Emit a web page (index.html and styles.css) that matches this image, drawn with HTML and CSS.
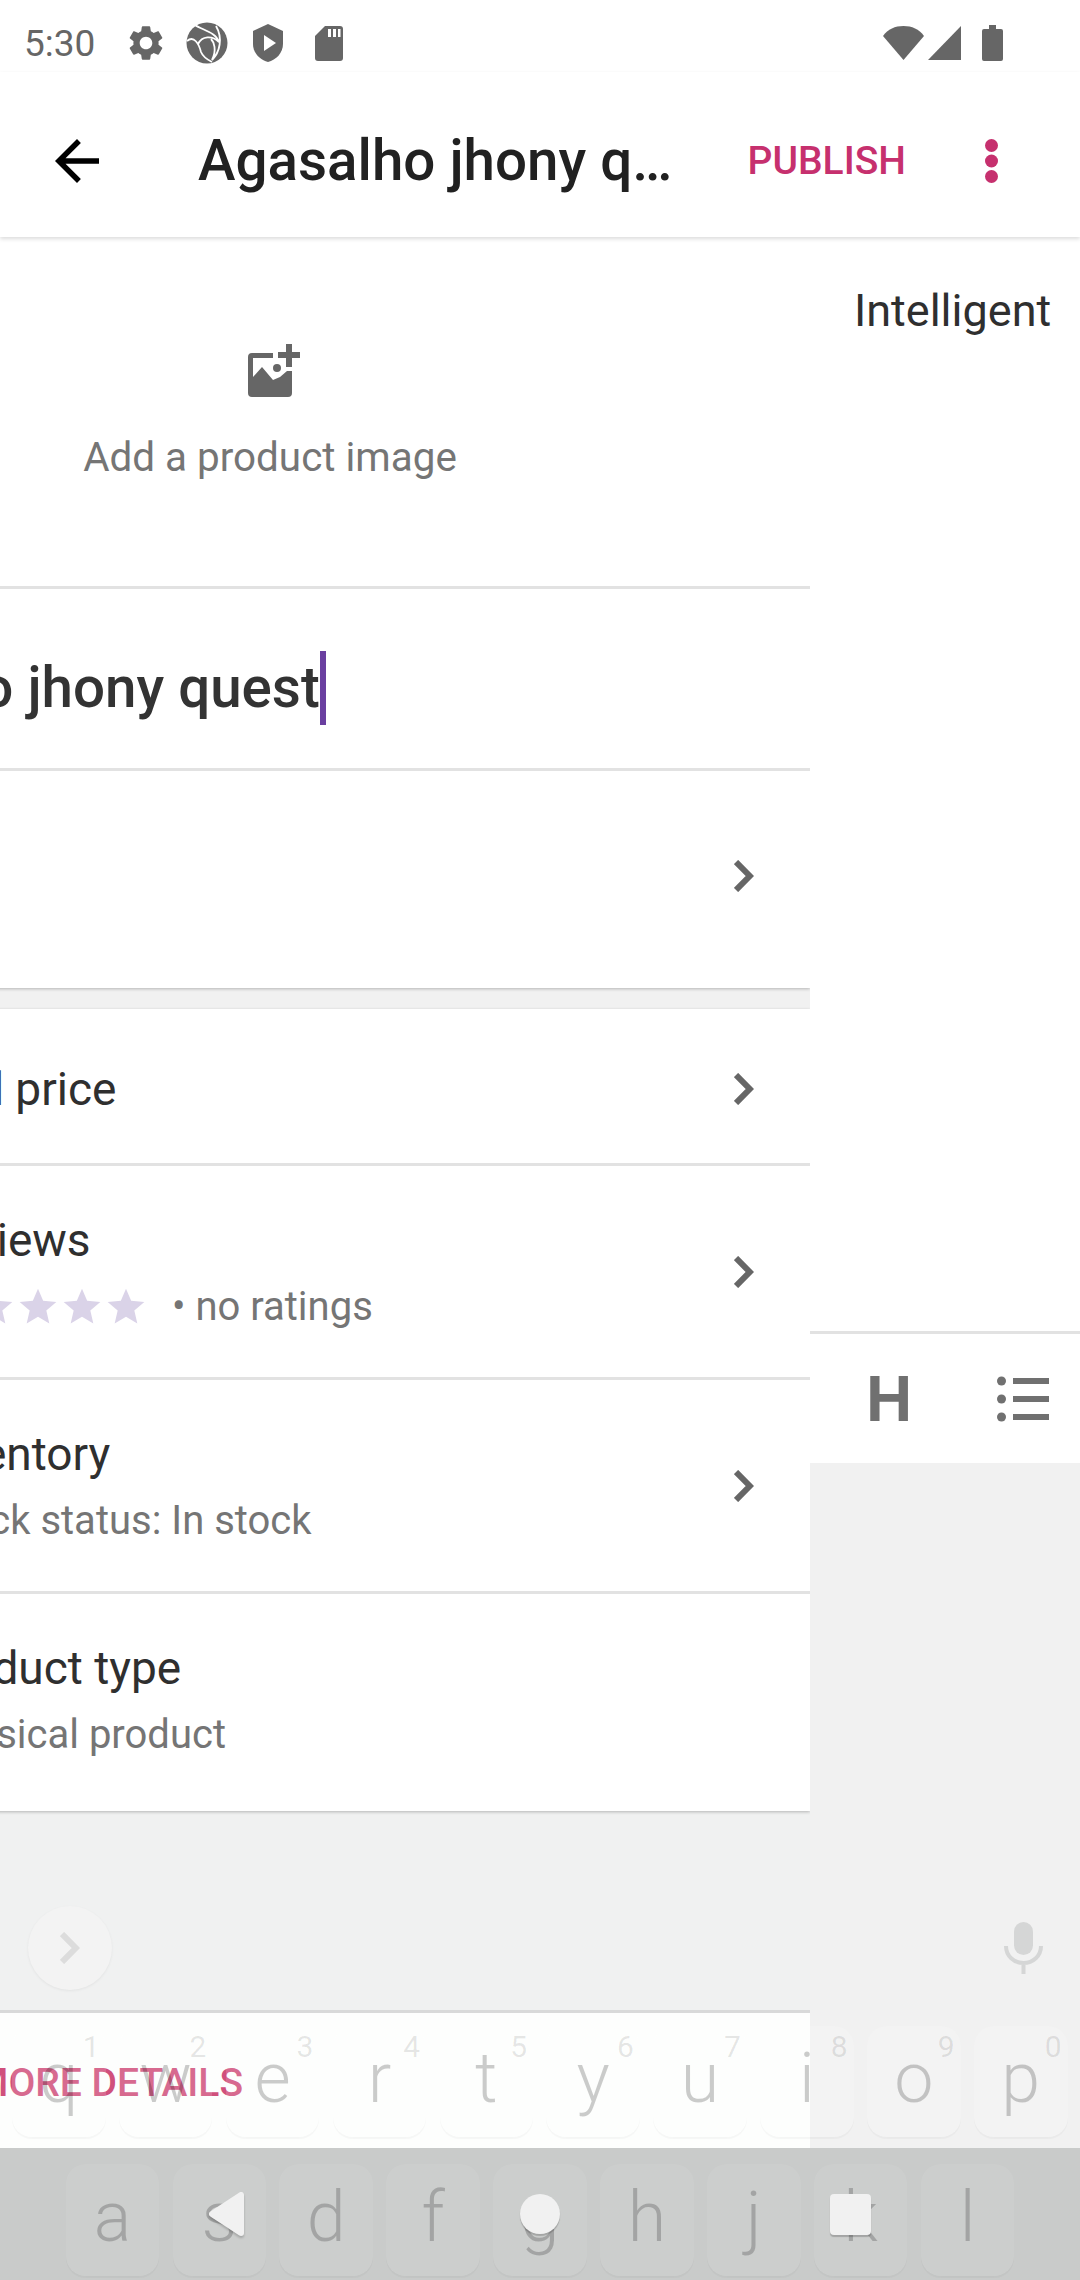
FILE: index.html
```html
<!DOCTYPE html>
<html lang="en">
<head>
  <meta charset="UTF-8" />
  <title>Agasalho jhony quest</title>
  <link rel="stylesheet" href="styles.css">
</head>
<body>
<div class="page">
  <div class="status">
    <span class="time">5:30</span>
    <svg class="st" viewBox="0 0 24 24"><path d="M19.14 12.94c.04-.3.06-.61.06-.94 0-.32-.02-.64-.07-.94l2.03-1.58c.18-.14.23-.41.12-.61l-1.92-3.32c-.12-.22-.37-.29-.59-.22l-2.39.96c-.5-.38-1.03-.7-1.62-.94l-.36-2.54c-.04-.24-.24-.41-.48-.41h-3.84c-.24 0-.43.17-.47.41l-.36 2.54c-.59.24-1.13.57-1.62.94l-2.39-.96c-.22-.08-.47 0-.59.22L2.74 8.87c-.12.21-.08.47.12.61l2.03 1.58c-.05.3-.09.63-.09.94s.02.64.07.94l-2.03 1.58c-.18.14-.23.41-.12.61l1.92 3.32c.12.22.37.29.59.22l2.39-.96c.5.38 1.03.7 1.62.94l.36 2.54c.05.24.24.41.48.41h3.84c.24 0 .44-.17.47-.41l.36-2.54c.59-.24 1.13-.56 1.62-.94l2.39.96c.22.08.47 0 .59-.22l1.92-3.32c.12-.22.07-.47-.12-.61l-2.01-1.58zM12 15.6c-1.98 0-3.6-1.62-3.6-3.6s1.62-3.6 3.6-3.6 3.6 1.62 3.6 3.6-1.62 3.6-3.6 3.6z"/></svg>
    <svg class="st" viewBox="0 0 42 42"><circle cx="21" cy="21" r="20.5"/><path d="M9 3 C16 8 30 10 33 20 C26 13 16 14 12 22 M30 4 C37 16 34 30 26 38 C31 28 28 20 25 17 M1 19 C8 13 13 22 15 30 C17 35 22 38 26 40" fill="none" stroke="#fff" stroke-width="1.8"/></svg>
    <svg class="st" viewBox="0 0 42 42"><path d="M21 2 L36 9 V22 C36 31 29 38 21 40 C13 38 6 31 6 22 V9 Z"/><path d="M17 13 L29 21 L17 29 Z" fill="#fff"/></svg>
    <svg class="st" viewBox="0 0 42 42"><path d="M17 4 H32 A3 3 0 0 1 35 7 V36 A3 3 0 0 1 32 39 H10 A3 3 0 0 1 7 36 V14 Z"/><path d="M20 7 h3 v8 h-3z M25 7 h3 v8 h-3z M30 7 h2.500 v8 h-2.500z" fill="#fff"/></svg>
    <div class="status-right">
      <svg class="st-wifi" viewBox="0 0 41 34"><path d="M20.500 34 L0 10 C5 3 12 0 20.500 0 C29 0 36 3 41 10 Z"/></svg>
      <svg class="st-signal" viewBox="0 0 33 34"><path d="M33 0 V34 H0 Z"/></svg>
      <svg class="st-batt" viewBox="0 0 21 36"><path d="M7 0 H14 V4 H19 A2 2 0 0 1 21 6 V34 A2 2 0 0 1 19 36 H2 A2 2 0 0 1 0 34 V6 A2 2 0 0 1 2 4 H7 Z"/></svg>
    </div>
  </div>

  <header class="appbar">
    <svg class="back" viewBox="0 0 24 24"><path d="M20 11H7.830l5.590-5.590L12 4l-8 8 8 8 1.410-1.410L7.830 13H20v-2z"/></svg>
    <h1 class="title">Agasalho jhony q…</h1>
    <span class="publish">PUBLISH</span>
    <svg class="more" viewBox="0 0 13 44"><circle cx="6.500" cy="6.500" r="6.500"/><circle cx="6.500" cy="22" r="6.500"/><circle cx="6.500" cy="37.500" r="6.500"/></svg>
  </header>

  <div class="main">
    <div class="sheet-clip">
      <div class="sheet">
        <section class="card">
          <div class="media">
            <svg class="add-photo" viewBox="0 0 52 53">
              <path d="M44 27 V49 a4 4 0 0 1 -4 4 H4 a4 4 0 0 1 -4 -4 V13 a4 4 0 0 1 4 -4 H25 V14 H5 V33 L14 23 L25 36 L32 33 L39 27 Z"/>
              <circle cx="29" cy="24" r="4"/>
              <path d="M38 0 h6 v8 h8 v6 h-8 v9 h-6 v-9 h-8 v-6 h8 z"/>
            </svg>
            <span class="media-label">Add a product image</span>
          </div>
          <div class="name-row">
            <span class="name">Agasalho jhony quest</span><span class="caret"></span>
          </div>
          <div class="row row-desc">
            <div class="row-text"></div>
            <svg class="chev" viewBox="0 0 20 32"><path d="M2 2 L15.800 16 L2 30"/></svg>
          </div>
        </section>

        <section class="card card-details">
          <div class="row row-price">
            <div class="row-text"><div class="row-title">Add price</div></div>
            <svg class="chev" viewBox="0 0 20 32"><path d="M2 2 L15.800 16 L2 30"/></svg>
          </div>
          <div class="row row-tall">
            <div class="row-text">
              <div class="row-title">Reviews</div>
              <div class="row-sub rating">
                <svg class="star" viewBox="0 0 24 24"><path d="M12 17.270L18.180 21l-1.640-7.030L22 9.240l-7.190-.610L12 2 9.190 8.630 2 9.240l5.460 4.730L5.820 21z"/></svg>
                <svg class="star" viewBox="0 0 24 24"><path d="M12 17.270L18.180 21l-1.640-7.030L22 9.240l-7.190-.610L12 2 9.190 8.630 2 9.240l5.460 4.730L5.820 21z"/></svg>
                <svg class="star" viewBox="0 0 24 24"><path d="M12 17.270L18.180 21l-1.640-7.030L22 9.240l-7.190-.610L12 2 9.190 8.630 2 9.240l5.460 4.730L5.820 21z"/></svg>
                <svg class="star" viewBox="0 0 24 24"><path d="M12 17.270L18.180 21l-1.640-7.030L22 9.240l-7.190-.610L12 2 9.190 8.630 2 9.240l5.460 4.730L5.820 21z"/></svg>
                <svg class="star" viewBox="0 0 24 24"><path d="M12 17.270L18.180 21l-1.640-7.030L22 9.240l-7.190-.610L12 2 9.190 8.630 2 9.240l5.460 4.730L5.820 21z"/></svg>
                <span class="rating-text">• no ratings</span>
              </div>
            </div>
            <svg class="chev" viewBox="0 0 20 32"><path d="M2 2 L15.800 16 L2 30"/></svg>
          </div>
          <div class="row row-tall">
            <div class="row-text">
              <div class="row-title">Inventory</div>
              <div class="row-sub">Stock status: In stock</div>
            </div>
            <svg class="chev" viewBox="0 0 20 32"><path d="M2 2 L15.800 16 L2 30"/></svg>
          </div>
          <div class="row row-last">
            <div class="row-text">
              <div class="row-title">Product type</div>
              <div class="row-sub">Physical product</div>
            </div>
          </div>
        </section>

        <div class="sheet-fill"></div>
        <div class="more-bar"><span class="more-details">ADD MORE DETAILS</span></div>
      </div>
    </div>

    <aside class="side">
      <div class="side-top">Intelligent</div>
      <div class="format-bar">
        <span class="format-h">H</span>
        <svg class="format-list" viewBox="0 0 52 46">
          <circle cx="4.500" cy="5" r="4.500"/><circle cx="4.500" cy="23" r="4.500"/><circle cx="4.500" cy="41" r="4.500"/>
          <rect x="16" y="2" width="36" height="6"/><rect x="16" y="20" width="36" height="6"/><rect x="16" y="38" width="36" height="6"/>
        </svg>
      </div>
      <div class="side-fill"></div>
    </aside>
  </div>

  <div class="keyboard">
    <div class="kb-strip">
      <span class="kb-circle"><svg class="kb-chev" viewBox="0 0 20 32"><path d="M2 2 L15.800 16 L2 30"/></svg></span>
      <svg class="kb-mic" viewBox="0 0 39 52">
        <rect x="10" y="0" width="19" height="33" rx="9.500"/>
        <path d="M2 24 C2 34 10 41 19.500 41 C29 41 37 34 37 24 M19.500 41 V52" fill="none" stroke="#d5d6d6" stroke-width="4"/>
      </svg>
    </div>
    <div class="kb-upper">
      <div class="kb-key"><i>1</i>q</div>
      <div class="kb-key"><i>2</i>w</div>
      <div class="kb-key"><i>3</i>e</div>
      <div class="kb-key"><i>4</i>r</div>
      <div class="kb-key"><i>5</i>t</div>
      <div class="kb-key"><i>6</i>y</div>
      <div class="kb-key"><i>7</i>u</div>
      <div class="kb-key"><i>8</i>i</div>
      <div class="kb-key"><i>9</i>o</div>
      <div class="kb-key"><i>0</i>p</div>
    </div>
    <div class="kb-lower">
      <div class="kb-key">a</div>
      <div class="kb-key">s</div>
      <div class="kb-key">d</div>
      <div class="kb-key">f</div>
      <div class="kb-key">g</div>
      <div class="kb-key">h</div>
      <div class="kb-key">j</div>
      <div class="kb-key">k</div>
      <div class="kb-key">l</div>
      <div class="navkeys">
        <svg class="nav-back" viewBox="0 0 38 46"><path d="M34 4 V42 L5 23 Z" stroke-linejoin="round"/></svg>
        <span class="nav-home"></span>
        <span class="nav-recent"></span>
      </div>
    </div>
  </div>
</div>
</body>
</html>
```

FILE: styles.css
```css
* {
  box-sizing: border-box;
}

body {
  margin: 0;
  font-family: Roboto, "Liberation Sans", sans-serif;
  background: #fff;
  color: #2f2f2f;
}

.page {
  position: relative;
  width: 1080px;
  height: 2280px;
  overflow: hidden;
  background: #fff;
}

/* status bar */
.status {
  display: flex;
  align-items: center;
  height: 72px;
  padding: 14px 0 0 24px;
  gap: 19px;
}

.time {
  font-size: 37px;
  color: #666;
  width: 71px;
  margin-right: 11px;
}

.st {
  width: 42px;
  height: 42px;
  fill: #666;
}

.status-right {
  display: flex;
  align-items: center;
  margin-left: auto;
  margin-right: 77px;
}

.st-wifi {
  width: 41px;
  height: 34px;
  fill: #666;
}

.st-signal {
  width: 33px;
  height: 34px;
  margin-left: 4px;
  fill: #666;
}

.st-batt {
  width: 21px;
  height: 36px;
  margin-left: 21px;
  fill: #666;
}

/* app bar */
.appbar {
  position: relative;
  z-index: 2;
  display: flex;
  align-items: center;
  height: 165px;
  padding: 12px 0 0 44px;
  background: #fff;
  box-shadow: 0 2px 4px rgba(0, 0, 0, 0.14);
}

.back {
  width: 66px;
  height: 66px;
  flex: none;
}

.title {
  flex: 1;
  margin: 0 0 0 88px;
  font-size: 56.500px;
  font-weight: 500;
  color: #212121;
  white-space: nowrap;
}

.publish {
  font-size: 39px;
  font-weight: 500;
  color: #c6306e;
}

.more {
  width: 13px;
  height: 44px;
  margin: 0 82px 0 79px;
  fill: #c6306e;
  flex: none;
}

.main {
  display: flex;
}

/* left panel, slid 270px off the screen */
.sheet-clip {
  width: 810px;
  overflow: hidden;
  flex: none;
}

.sheet {
  width: 1080px;
  margin-left: -270px;
  background: #f1f1f1;
}

.card {
  position: relative;
  background: #fff;
  box-shadow: 0 1px 3px rgba(0, 0, 0, 0.25);
}

.card-details {
  margin-top: 21px;
}

.media {
  display: flex;
  flex-direction: column;
  align-items: center;
  height: 352px;
  padding-top: 107px;
  border-bottom: 3px solid #e2e2e2;
}

.add-photo {
  width: 52px;
  height: 53px;
  margin-left: 8px;
  fill: #666;
}

.media-label {
  margin-top: 37px;
  font-size: 40.400px;
  color: #757575;
}

.name-row {
  display: flex;
  align-items: center;
  height: 182px;
  padding: 18px 0 0 46px;
  border-bottom: 3px solid #e2e2e2;
}

.name {
  font-size: 56.500px;
  font-weight: 500;
  color: #333;
}

.caret {
  width: 6px;
  height: 74px;
  background: #6a3fa0;
}

.row {
  display: flex;
  align-items: center;
  justify-content: space-between;
  padding: 0 56px 0 192px;
  border-bottom: 3px solid #e2e2e2;
}

.row-desc {
  height: 217px;
  padding-bottom: 8px;
  border-bottom: 0;
}

.row-price {
  height: 157px;
  padding-top: 6px;
}

.row-tall {
  height: 214px;
}

.row-last {
  align-items: flex-start;
  height: 217px;
  padding-top: 46px;
  border-bottom: 0;
}

.row-title {
  font-size: 46px;
  line-height: 56px;
  color: #2f2f2f;
}

.row-sub {
  margin: 14px 0 0 8px;
  font-size: 40px;
  line-height: 50px;
  color: #757575;
}

.rating {
  display: flex;
  align-items: center;
  margin-left: 6px;
}

.star {
  width: 44px;
  height: 44px;
  fill: #dad3e8;
}

.rating-text {
  margin-left: 24px;
}

.chev {
  width: 20px;
  height: 32px;
  flex: none;
  fill: none;
  stroke: #666;
  stroke-width: 6;
}

.sheet-fill {
  height: 202px;
  border-bottom: 3px solid #d8d9d9;
  background: #f0f1f1;
}

.more-bar {
  display: flex;
  justify-content: flex-end;
  height: 264px;
  padding: 47px 567px 0 0;
  background: #fdfefd;
}

.more-details {
  font-size: 39px;
  font-weight: 500;
  color: #d0507c;
}

/* right panel */
.side {
  width: 270px;
  display: flex;
  flex-direction: column;
  background: #fff;
}

.side-top {
  height: 1097px;
  padding: 47px 0 0 44px;
  font-size: 45px;
  color: #2f2f2f;
  border-bottom: 3px solid #e2e2e2;
}

.format-bar {
  display: flex;
  align-items: center;
  height: 129px;
  padding-left: 56px;
}

.format-h {
  font-family: "Liberation Sans", sans-serif;
  font-size: 64px;
  font-weight: 700;
  color: #707070;
}

.format-list {
  width: 52px;
  height: 46px;
  margin-left: 85px;
  fill: #707070;
}

.side-fill {
  height: 817px;
  background: #f1f1f1;
}

/* keyboard fading in above everything */
.keyboard {
  position: absolute;
  left: 0;
  right: 0;
  bottom: 0;
  z-index: 3;
}

.kb-strip {
  display: flex;
  align-items: center;
  justify-content: space-between;
  height: 110px;
  padding: 0 37px 26px 28px;
}

.kb-circle {
  display: flex;
  align-items: center;
  justify-content: center;
  width: 84px;
  height: 84px;
  border-radius: 50%;
  background: #f3f3f3;
  box-shadow: 0 1px 3px rgba(0, 0, 0, 0.06);
}

.kb-chev {
  width: 20px;
  height: 32px;
  fill: none;
  stroke: #dcdcdc;
  stroke-width: 6;
}

.kb-mic {
  width: 39px;
  height: 52px;
  fill: #d5d6d6;
}

.kb-upper,
.kb-lower {
  display: flex;
  height: 132px;
  font-size: 70px;
  font-weight: 300;
}

.kb-upper {
  gap: 13.400px;
  padding: 10px 12px 11px;
}

.kb-lower {
  position: relative;
  justify-content: center;
  gap: 13.400px;
  padding: 16px 0 4px;
  background: #c9cbca;
}

.kb-key {
  position: relative;
  display: flex;
  align-items: center;
  justify-content: center;
  width: 93.500px;
  flex: none;
  padding-bottom: 7px;
  border-radius: 20px;
  background: rgba(255, 255, 255, 0.15);
  box-shadow: 0 2px 1px rgba(0, 0, 0, 0.03);
  color: rgba(0, 0, 0, 0.2);
}

.kb-lower .kb-key {
  background: rgba(255, 255, 255, 0.07);
}

.kb-key i {
  position: absolute;
  top: 5px;
  right: 6px;
  font-size: 30px;
  line-height: 32px;
  font-style: normal;
  font-weight: 400;
  color: rgba(0, 0, 0, 0.1);
}

.navkeys {
  position: absolute;
  inset: 0;
  display: flex;
  align-items: center;
  padding-left: 207px;
}

.nav-back {
  width: 38px;
  height: 46px;
  fill: #f1f1f1;
  stroke: #f1f1f1;
  stroke-width: 6;
  filter: drop-shadow(0 2px 1px rgba(0, 0, 0, 0.2));
}

.nav-home {
  width: 40px;
  height: 40px;
  margin-left: 275px;
  border-radius: 50%;
  background: #f1f1f1;
  box-shadow: 0 2px 1px rgba(0, 0, 0, 0.2);
}

.nav-recent {
  width: 41px;
  height: 41px;
  margin-left: 270px;
  border-radius: 4px;
  background: #f1f1f1;
  box-shadow: 0 2px 1px rgba(0, 0, 0, 0.2);
}
```
